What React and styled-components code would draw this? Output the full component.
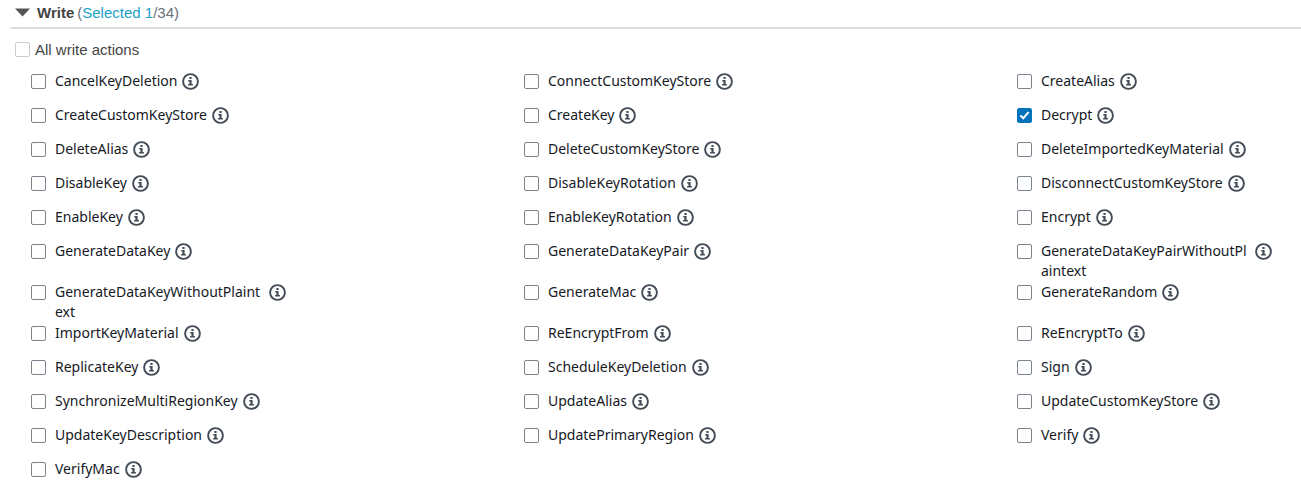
import React, { useState } from "react";
import styled, { createGlobalStyle } from "styled-components";

const GlobalStyle = createGlobalStyle`
  body {
    margin: 0;
    background: #fff;
    font-family: "Liberation Sans", Arial, sans-serif;
    color: #444;
  }
`;

const Panel = styled.section`
  padding: 0 0 0 11px;
`;

const Header = styled.h2`
  margin: 0;
  height: 27px;
  border-bottom: 2px solid #dadada;
  font-size: 15px;
  font-weight: 400;
`;

const Toggle = styled.button`
  display: flex;
  align-items: center;
  height: 24px;
  padding: 0 0 0 4px;
  border: 0;
  background: none;
  color: #687078;
  font: inherit;
  cursor: pointer;
`;

const Caret = styled.svg`
  width: 15px;
  height: 9px;
  margin-right: 7px;
  fill: #545454;
`;

const Title = styled.strong`
  margin-right: 3px;
  color: #444;
`;

const Selected = styled.span`
  color: #1a9fc9;
`;

const Checkbox = styled.input.attrs({ type: "checkbox" })`
  appearance: none;
  position: relative;
  flex: none;
  width: 15px;
  height: 15px;
  margin: 0;
  border: 1px solid ${(p) => (p.$faint ? "#ccc" : "#7b848c")};
  border-radius: 2px;
  background: #fff;

  &:checked {
    border-color: #0073bb;
    background: #0073bb;
  }

  &:checked::after {
    content: "";
    position: absolute;
    left: 4px;
    top: 1px;
    width: 3px;
    height: 7px;
    border: solid #fff;
    border-width: 0 2px 2px 0;
    transform: rotate(42deg);
  }
`;

const AllLabel = styled.label`
  display: flex;
  align-items: center;
  gap: 5px;
  height: 20px;
  padding: 10px 0 0 4px;
  font-size: 15px;
`;

const Grid = styled.ul`
  display: grid;
  grid-template-columns: 1fr 1fr 284px;
  margin: 0;
  padding: 12px 0 0 20px;
  list-style: none;
`;

const Item = styled.li`
  display: flex;
  align-items: flex-start;
  gap: 5px;
  min-height: 33px;
  padding-bottom: 1px;
`;

const ItemLabel = styled.label`
  display: flex;
  align-items: flex-start;
  gap: 9px;
  color: #16191f;
  font: 14px/20px "Noto Sans", sans-serif;

  ${Checkbox} {
    margin-top: 3px;
  }
`;

const ItemText = styled.span`
  max-width: 209px;
  overflow-wrap: anywhere;
`;

const InfoButton = styled.button`
  flex: none;
  display: flex;
  margin-top: 2px;
  padding: 0;
  border: 0;
  background: none;
  color: #434b57;
  cursor: pointer;
`;

const InfoIcon = () => (
  <svg width="17" height="17" viewBox="0 0 17 17" aria-hidden="true">
    <circle cx="8.5" cy="8.5" r="7.4" fill="none" stroke="currentColor" strokeWidth="1.9" />
    <path
      fill="currentColor"
      d="M7.4 4h2.2v2H7.4zM6.3 7h3.3v4h1.3v1.6H6.1V11h1.3V8.5H6.3z"
    />
  </svg>
);

const ACTIONS = [
  "CancelKeyDeletion", "ConnectCustomKeyStore", "CreateAlias",
  "CreateCustomKeyStore", "CreateKey", "Decrypt",
  "DeleteAlias", "DeleteCustomKeyStore", "DeleteImportedKeyMaterial",
  "DisableKey", "DisableKeyRotation", "DisconnectCustomKeyStore",
  "EnableKey", "EnableKeyRotation", "Encrypt",
  "GenerateDataKey", "GenerateDataKeyPair", "GenerateDataKeyPairWithoutPlaintext",
  "GenerateDataKeyWithoutPlaintext", "GenerateMac", "GenerateRandom",
  "ImportKeyMaterial", "ReEncryptFrom", "ReEncryptTo",
  "ReplicateKey", "ScheduleKeyDeletion", "Sign",
  "SynchronizeMultiRegionKey", "UpdateAlias", "UpdateCustomKeyStore",
  "UpdateKeyDescription", "UpdatePrimaryRegion", "Verify",
  "VerifyMac",
];

export default function App() {
  const [open, setOpen] = useState(true);
  const [chosen, setChosen] = useState(["Decrypt"]);
  const all = chosen.length === ACTIONS.length;
  const flip = (name) =>
    setChosen((c) => (c.includes(name) ? c.filter((n) => n !== name) : [...c, name]));

  return (
    <Panel>
      <GlobalStyle />
      <Header>
        <Toggle type="button" aria-expanded={open} onClick={() => setOpen(!open)}>
          <Caret viewBox="0 0 15 9" aria-hidden="true">
            <path d="M0 0.5h15L7.5 8.5z" />
          </Caret>
          <Title>Write</Title>
          <span>
            (<Selected>Selected {chosen.length}</Selected>/{ACTIONS.length})
          </span>
        </Toggle>
      </Header>
      {open && (
        <>
          <AllLabel>
            <Checkbox $faint checked={all} onChange={() => setChosen(all ? [] : ACTIONS)} />
            All write actions
          </AllLabel>
          <Grid>
            {ACTIONS.map((name) => (
              <Item key={name}>
                <ItemLabel>
                  <Checkbox checked={chosen.includes(name)} onChange={() => flip(name)} />
                  <ItemText>{name}</ItemText>
                </ItemLabel>
                <InfoButton type="button" aria-label={`About ${name}`}>
                  <InfoIcon />
                </InfoButton>
              </Item>
            ))}
          </Grid>
        </>
      )}
    </Panel>
  );
}
